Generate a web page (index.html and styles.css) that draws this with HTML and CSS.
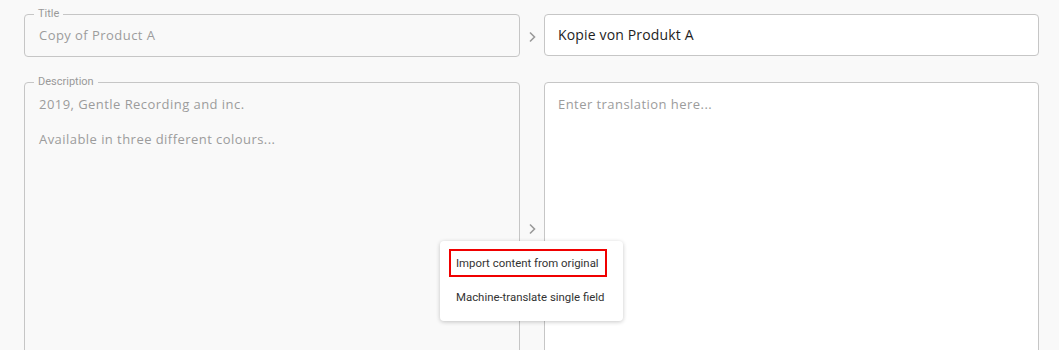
FILE: index.html
```html
<!DOCTYPE html>
<html lang="en">
<head>
  <meta charset="UTF-8">
  <title>Translate fields</title>
  <link rel="stylesheet" href="styles.css">
</head>
<body>
  <div class="translate-grid">
    <fieldset class="source-field">
      <legend>Title</legend>
      <div class="source-text">Copy of Product A</div>
    </fieldset>
    <div class="copy-arrow">
      <svg width="10" height="12" viewBox="0 0 10 12"><path d="M3 1.5 L7.5 6 L3 10.5" fill="none" stroke="#9a9a9a" stroke-width="1.6"/></svg>
    </div>
    <div class="target-input">Kopie von Produkt A</div>

    <fieldset class="source-field source-area">
      <legend>Description</legend>
      <div class="source-text multi">2019, Gentle Recording and inc.<br><br>Available in three different colours...</div>
    </fieldset>
    <div class="copy-arrow arrow-area">
      <svg width="10" height="12" viewBox="0 0 10 12"><path d="M3 1.5 L7.5 6 L3 10.5" fill="none" stroke="#9a9a9a" stroke-width="1.6"/></svg>
    </div>
    <div class="target-input target-area">
      <span class="placeholder">Enter translation here...</span>
    </div>
  </div>

  <div class="context-menu">
    <div class="menu-item highlighted">Import content from original</div>
    <div class="menu-item">Machine-translate single field</div>
  </div>
</body>
</html>
```
FILE: styles.css
```css
html, body {
  margin: 0;
  background: #f9f9f9;
  overflow: hidden;
}
body {
  padding: 8px 21px 0 24px;
  font-family: "Open Sans", sans-serif;
  position: relative;
  height: 350px;
  box-sizing: border-box;
}
.translate-grid {
  display: grid;
  grid-template-columns: 496px 24px 495px;
  row-gap: 19px;
}
.source-field {
  margin: 0;
  padding: 0 14px;
  border: 1px solid #c6c6c6;
  border-radius: 4px;
  min-width: 0;
}
.source-field legend {
  margin-left: -5px;
  padding: 0 4px;
  font-family: Roboto, sans-serif;
  font-size: 11px;
  line-height: 12px;
  color: #999;
}
.source-text {
  padding: 6px 0 12px;
  font-size: 13px;
  letter-spacing: 0.45px;
  line-height: 18px;
  color: #9c9c9c;
}
.source-text.multi {
  padding-top: 8px;
  line-height: 17.5px;
  height: 300px;
}
.copy-arrow {
  display: flex;
  align-items: center;
  justify-content: center;
  padding-top: 8px;
}
.arrow-area {
  align-items: flex-start;
  padding-top: 147px;
}
.target-input {
  margin-top: 6px;
  height: 42px;
  box-sizing: border-box;
  padding: 11px 13px 0;
  border: 1px solid #c6c6c6;
  border-radius: 4px;
  background: #fff;
  font-size: 14px;
  letter-spacing: 0.15px;
  line-height: 18px;
  color: #1e1e1e;
}
.target-area {
  height: 320px;
  padding-top: 13px;
  font-size: 13px;
  letter-spacing: 0.45px;
  line-height: 17.5px;
}
.placeholder {
  color: #9c9c9c;
}
.context-menu {
  position: absolute;
  left: 440px;
  top: 241px;
  width: 183px;
  box-sizing: border-box;
  padding: 8px 16px 8px 9px;
  background: #fff;
  border-radius: 4px;
  box-shadow: 0 1px 4px rgba(0, 0, 0, 0.22);
  font-family: Roboto, sans-serif;
  font-size: 11.4px;
  color: #333;
}
.menu-item {
  height: 28px;
  line-height: 28px;
  padding: 0 5px;
  border: 2px solid transparent;
  margin-bottom: 4px;
  white-space: nowrap;
}
.menu-item:last-child {
  margin-bottom: 0;
}
.menu-item.highlighted {
  border-color: #f00000;
  line-height: 24px;
  height: 28px;
  box-sizing: border-box;
}
```
